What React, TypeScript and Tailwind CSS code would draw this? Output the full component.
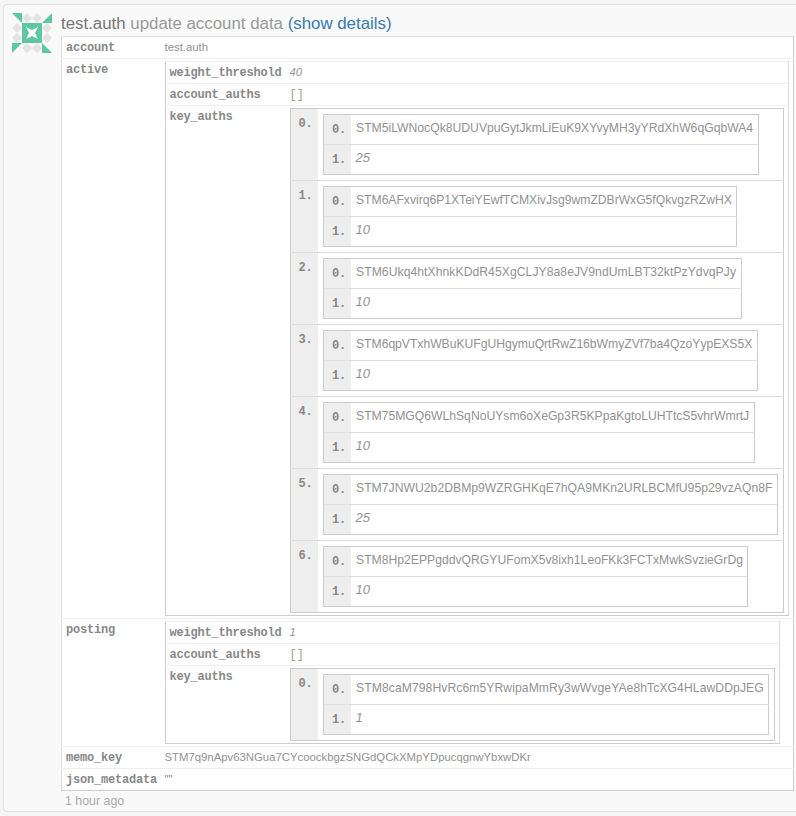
const keys: [string, string, string][] = [
  ["STM5iLWNocQk8UDUVpuGytJkmLiEuK9XYvyMH3yYRdXhW6qGqbWA4", "25", "tracking-[0px]"],
  ["STM6AFxvirq6P1XTeiYEwfTCMXivJsg9wmZDBrWxG5fQkvgzRZwHX", "10", "tracking-[-0.03px]"],
  ["STM6Ukq4htXhnkKDdR45XgCLJY8a8eJV9ndUmLBT32ktPzYdvqPJy", "10", "tracking-[0.047px]"],
  ["STM6qpVTxhWBuKUFgUHgymuQrtRwZ16bWmyZVf7ba4QzoYypEXS5X", "10", "tracking-[-0.028px]"],
  ["STM75MGQ6WLhSqNoUYsm6oXeGp3R5KPpaKgtoLUHTtcS5vhrWmrtJ", "10", "tracking-[-0.01px]"],
  ["STM7JNWU2b2DBMp9WZRGHKqE7hQA9MKn2URLBCMfU95p29vzAQn8F", "25", "tracking-[0.02px]"],
  ["STM8Hp2EPPgddvQRGYUFomX5v8ixh1LeoFKk3FCTxMwkSvzieGrDg", "10", "tracking-[0px]"],
];

const thMono = "font-['Liberation_Mono',monospace] font-bold text-[12px] tracking-[-0.2px] leading-[16px] text-[#888] text-left";

function Identicon() {
  const teal = "#5bc8a0";
  const grey = "#e3e3e3";
  const d = (x: number, y: number) => `${x + 5},${y} ${x + 10},${y + 5} ${x + 5},${y + 10} ${x},${y + 5}`;
  return (
    <svg width="40" height="40" viewBox="0 0 40 40" className="block">
      {[[10, 0], [20, 0], [0, 10], [30, 10], [0, 20], [30, 20], [10, 30], [20, 30]].map(([x, y]) => (
        <polygon key={`${x}-${y}`} points={d(x, y)} fill={grey} />
      ))}
      <polygon points="0,0 10,0 10,10" fill={teal} />
      <polygon points="40,0 40,10 30,10" fill={teal} />
      <polygon points="40,40 30,40 30,30" fill={teal} />
      <polygon points="0,40 0,30 10,30" fill={teal} />
      <rect x="10" y="10" width="20" height="20" fill={teal} />
      <polygon points="14,14 20,17 26,14 23,20 26,26 20,23 14,26 17,20" fill="#fff" />
    </svg>
  );
}

function Pair({ k, w, t }: { k: string; w: string; t: string }) {
  return (
    <table className="border-collapse border border-[#ccc] bg-white">
      <tbody>
        <tr className="border-b border-[#ddd]">
          <th className={`${thMono} bg-[#eee] w-[27px] h-[30px] pl-[8px] pr-[2px] align-middle`}>0.</th>
          <td className={`pl-[5.5px] pr-[4.5px] pb-[3px] h-[30px] align-middle text-[12.18px] leading-[16px] text-[#929292] whitespace-nowrap ${t}`}>{k}</td>
        </tr>
        <tr>
          <th className={`${thMono} bg-[#eee] w-[27px] h-[30px] pl-[8px] pr-[2px] align-middle`}>1.</th>
          <td className="pl-[5px] pr-[5px] pb-[4px] h-[30px] align-middle text-[13px] leading-[16px] italic text-[#929292]">{w}</td>
        </tr>
      </tbody>
    </table>
  );
}

function KeyList({ items }: { items: [string, string, string][] }) {
  return (
    <table className="border-collapse border border-[#ccc] bg-white">
      <tbody>
        {items.map(([k, w, t], i) => (
          <tr key={k} className="border-b border-[#ddd] last:border-b-0">
            <th className={`${thMono} bg-[#eee] w-[28px] pt-[7px] pl-[8px] pr-[2px] align-top`}>{i}.</th>
            <td className="pt-[5px] pr-[5px] pb-[5px] pl-[5px] align-top"><Pair k={k} w={w} t={t} /></td>
          </tr>
        ))}
      </tbody>
    </table>
  );
}

function Authority({ threshold, items }: { threshold: string; items: [string, string, string][] }) {
  return (
    <table className="border-collapse border border-[#ccc] border-t-[#eee] border-r-[#ddd] bg-white">
      <tbody>
        <tr className="border-b border-[#eee]">
          <th className={`${thMono} pl-[4px] pr-[8px] h-[22px] align-middle whitespace-nowrap`}>weight_threshold</th>
          <td className="h-[22px] align-middle text-[11.35px] italic text-[#929292]">{threshold}</td>
        </tr>
        <tr className="border-b border-[#eee]">
          <th className={`${thMono} pl-[4px] pr-[8px] h-[22px] align-middle whitespace-nowrap`}>account_auths</th>
          <td className="h-[22px] align-middle font-['Liberation_Mono',monospace] text-[12px] text-[#a59a8a]">[]</td>
        </tr>
        <tr>
          <th className={`${thMono} pl-[4px] pr-[8px] pt-[3px] align-top`}>key_auths</th>
          <td className="pt-[2px] pb-[2px] pr-[4px]"><KeyList items={items} /></td>
        </tr>
      </tbody>
    </table>
  );
}

export default function App() {
  return (
    <div className="h-[816px] overflow-hidden bg-[#f5f5f5] pt-[4px] pl-[3px] font-['Liberation_Sans',sans-serif]">
      <div className="flex h-[808px] gap-[9px] rounded-l-[4px] border border-r-0 border-[#e2e2e2] bg-[#f9f9f9] pl-[8px] pt-[8px] pr-[2px]">
        <div><Identicon /></div>
        <div className="min-w-0 flex-1">
          <div className="h-[23px] text-[16.85px] leading-[22px] text-[#999] whitespace-nowrap">
            <span className="text-[#777]">test.auth</span> update account data <span className="text-[#337ab7]">(show details)</span>
          </div>
          <table className="w-full border-collapse border border-[#ddd] border-b-[#ccc] border-r-[#ccc] bg-white">
            <tbody>
              <tr className="border-b border-[#eee]">
                <th className={`${thMono} w-[103px] pl-[4px] h-[22px] align-middle`}>account</th>
                <td className="text-[11.35px] text-[#929292] align-middle">test.auth</td>
              </tr>
              <tr className="border-b border-[#eee]">
                <th className={`${thMono} pl-[4px] pt-[3px] align-top`}>active</th>
                <td className="pt-[2px] pb-[2px]"><Authority threshold="40" items={keys} /></td>
              </tr>
              <tr className="border-b border-[#eee]">
                <th className={`${thMono} pl-[4px] pt-[3px] align-top`}>posting</th>
                <td className="pt-[2px] pb-[2px]">
                  <Authority threshold="1" items={[["STM8caM798HvRc6m5YRwipaMmRy3wWvgeYAe8hTcXG4HLawDDpJEG", "1", "tracking-[0.065px]"]]} />
                </td>
              </tr>
              <tr className="border-b border-[#eee]">
                <th className={`${thMono} pl-[4px] h-[22px] align-middle`}>memo_key</th>
                <td className="text-[11.35px] text-[#929292] align-middle">STM7q9nApv63NGua7CYcoockbgzSNGdQCkXMpYDpucqgnwYbxwDKr</td>
              </tr>
              <tr>
                <th className={`${thMono} pl-[4px] h-[22px] align-middle whitespace-nowrap`}>json_metadata</th>
                <td className="text-[11.35px] text-[#789] align-middle">""</td>
              </tr>
            </tbody>
          </table>
          <div className="pl-[4px] pt-[2px] text-[12.4px] leading-[16px] text-[#aaa]">1 hour ago</div>
        </div>
      </div>
    </div>
  );
}
